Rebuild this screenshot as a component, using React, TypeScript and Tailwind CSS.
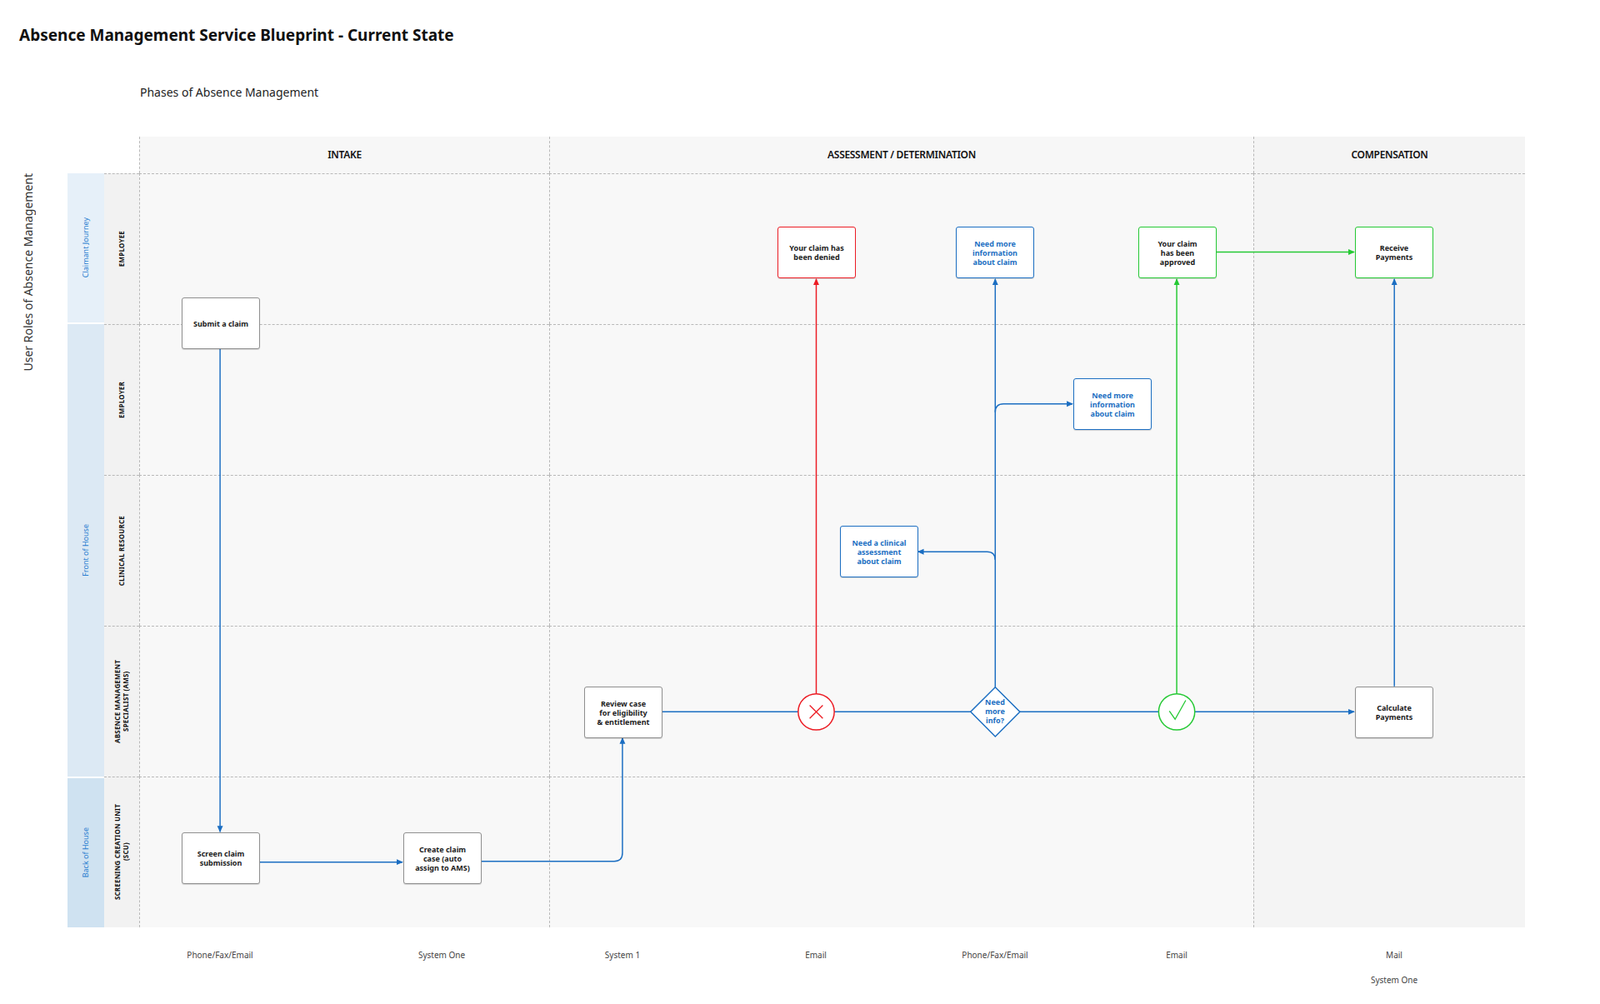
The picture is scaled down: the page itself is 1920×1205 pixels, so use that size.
import React from 'react';

const BLUE = '#1b6ec2';
const RED = '#ec1c24';
const GREEN = '#25c934';
const K = 0.9854;
const s = (v: number) => Math.round(v * K);

type NodeProps = { x: number; y: number; color?: 'gray' | 'red' | 'blue' | 'green'; lines: string[] };

const borderFor: Record<string, string> = {
  gray: 'border-[#8f8f8f] text-[#1a1a1a]',
  red: 'border-[#ec1c24] text-[#1a1a1a]',
  blue: 'border-[#1b6ec2] text-[#1b6ec2]',
  green: 'border-[#25c934] text-[#1a1a1a]',
};

const Node: React.FC<NodeProps> = ({ x, y, color = 'gray', lines }) => (
  <div
    className={`absolute w-[94px] h-[62px] bg-white border-[1.5px] rounded-[3px] shadow-[0_1px_1px_rgba(0,0,0,0.15)] flex flex-col items-center justify-center text-[9px] leading-[11px] font-bold text-center ${borderFor[color]}`}
    style={{ left: s(x), top: s(y) }}
  >
    {lines.map((l) => (
      <span key={l}>{l}</span>
    ))}
  </div>
);

const channels = [
  { x: 268, t: 'Phone/Fax/Email' },
  { x: 538, t: 'System One' },
  { x: 758, t: 'System 1' },
  { x: 994, t: 'Email' },
  { x: 1212, t: 'Phone/Fax/Email' },
  { x: 1433, t: 'Email' },
  { x: 1698, t: 'Mail' },
];

const roles = [
  ['EMPLOYEE'],
  ['EMPLOYER'],
  ['CLINICAL RESOURCE'],
  ['ABSENCE MANAGEMENT', 'SPECIALIST (AMS)'],
  ['SCREENING CREATION UNIT', '(SCU)'],
];

const App: React.FC = () => {
  return (
    <div className="relative w-[1920px] h-[1205px] bg-white font-['Lato','Liberation_Sans',sans-serif] text-[#111]">
      <div className="pt-[30px] pl-[23px] text-[19px] leading-[24px] font-bold">
        Absence Management Service Blueprint - Current State
      </div>
      <div className="mt-[47px] pl-[168px] text-[14px] leading-[20px] text-[#222]">Phases of Absence Management</div>

      <div className="mt-[43px] flex">
        <div className="w-[81px] pt-[44px] pl-[23px]">
          <div className="[writing-mode:vertical-rl] rotate-180 text-[14px] text-[#333] whitespace-nowrap">
            User Roles of Absence Management
          </div>
        </div>
        <div className="grid grid-cols-[44px_42px_492px_845px_326px] grid-rows-[44px_repeat(5,181px)]">
          <div />
          <div />
          {['INTAKE', 'ASSESSMENT / DETERMINATION', 'COMPENSATION'].map((p, i) => (
            <div
              key={p}
              className={`border-l border-dashed border-[#b8b8b8] flex items-center justify-center text-[12px] font-semibold tracking-tight ${i === 2 ? 'bg-[#f4f4f4]' : 'bg-[#f7f7f7]'}`}
            >
              {p}
            </div>
          ))}

          <div className="col-start-1 row-start-2 bg-[#e6f0f9] border-b-2 border-white flex items-center justify-center">
            <span className="[writing-mode:vertical-rl] rotate-180 text-[9px] text-[#2a7fd0]">Claimant Journey</span>
          </div>
          <div className="col-start-1 row-start-3 row-span-3 bg-[#dce9f4] flex items-center justify-center">
            <span className="[writing-mode:vertical-rl] rotate-180 text-[9px] text-[#2a7fd0]">Front of House</span>
          </div>
          <div className="col-start-1 row-start-6 bg-[#cfe2f1] border-t-2 border-white flex items-center justify-center">
            <span className="[writing-mode:vertical-rl] rotate-180 text-[9px] text-[#2a7fd0]">Back of House</span>
          </div>

          {roles.map((r, i) => (
            <React.Fragment key={r[0]}>
              <div
                className="col-start-2 bg-[#f2f2f2] border-t border-dashed border-[#b8b8b8] flex items-center justify-center"
                style={{ gridRowStart: i + 2 }}
              >
                <span className="[writing-mode:vertical-rl] rotate-180 text-[8px] leading-[10px] font-bold tracking-wide text-center whitespace-nowrap">
                  {r.map((l) => (
                    <span key={l} className="block">{l}</span>
                  ))}
                </span>
              </div>
              <div className="col-start-3 bg-[#f8f8f8] border-t border-l border-dashed border-[#b8b8b8]" style={{ gridRowStart: i + 2 }} />
              <div className="col-start-4 bg-[#f8f8f8] border-t border-l border-dashed border-[#b8b8b8]" style={{ gridRowStart: i + 2 }} />
              <div className="col-start-5 bg-[#f4f4f4] border-t border-l border-dashed border-[#b8b8b8]" style={{ gridRowStart: i + 2 }} />
            </React.Fragment>
          ))}
        </div>
      </div>

      {/* flow lines */}
      <svg className="absolute left-0 top-0 pointer-events-none" width={1920} height={1205}>
        <defs>
          <marker id="ab" markerWidth="8" markerHeight="8" refX="7" refY="4" orient="auto" markerUnits="userSpaceOnUse">
            <path d="M0 0.5 L8 4 L0 7.5 Z" fill={BLUE} />
          </marker>
          <marker id="ar" markerWidth="8" markerHeight="8" refX="7" refY="4" orient="auto" markerUnits="userSpaceOnUse">
            <path d="M0 0.5 L8 4 L0 7.5 Z" fill={RED} />
          </marker>
          <marker id="ag" markerWidth="8" markerHeight="8" refX="7" refY="4" orient="auto" markerUnits="userSpaceOnUse">
            <path d="M0 0.5 L8 4 L0 7.5 Z" fill={GREEN} />
          </marker>
        </defs>
        <g transform={`scale(${K})`}>
          <g fill="none" strokeWidth={1.5}>
            <path d="M268 424 V1013" stroke={BLUE} markerEnd="url(#ab)" />
            <path d="M316 1050 H490" stroke={BLUE} markerEnd="url(#ab)" />
            <path d="M585 1049 H748 Q758 1049 758 1039 V899" stroke={BLUE} markerEnd="url(#ab)" />
            <path d="M805 867 H1649" stroke={BLUE} markerEnd="url(#ab)" />
            <path d="M994 845 V340" stroke={RED} markerEnd="url(#ar)" />
            <path d="M1212 837 V340" stroke={BLUE} markerEnd="url(#ab)" />
            <path d="M1212 502 Q1212 492 1222 492 H1306" stroke={BLUE} markerEnd="url(#ab)" />
            <path d="M1212 682 Q1212 672 1202 672 H1118" stroke={BLUE} markerEnd="url(#ab)" />
            <path d="M1433 845 V340" stroke={GREEN} markerEnd="url(#ag)" />
            <path d="M1480 307 H1649" stroke={GREEN} markerEnd="url(#ag)" />
            <path d="M1698 836 V340" stroke={BLUE} markerEnd="url(#ab)" />
          </g>
          <circle cx={994} cy={867} r={22} fill="white" stroke={RED} strokeWidth={1.5} />
          <path d="M986 859 L1002 875 M1002 859 L986 875" stroke={RED} strokeWidth={1.3} />
          <polygon points="1212,837 1242,867 1212,897 1182,867" fill="white" stroke={BLUE} strokeWidth={1.5} />
          <circle cx={1433} cy={867} r={22} fill="white" stroke={GREEN} strokeWidth={1.5} />
          <path d="M1424 866 L1431 876 L1444 853" fill="none" stroke={GREEN} strokeWidth={1.3} />
        </g>
      </svg>

      <div
        className="absolute w-[60px] flex flex-col items-center text-[9px] leading-[11px] font-bold text-[#1b6ec2]"
        style={{ left: s(1212) - 30, top: s(867) - 17 }}
      >
        <span>Need</span>
        <span>more</span>
        <span>info?</span>
      </div>

      <Node x={221} y={362} lines={['Submit a claim']} />
      <Node x={221} y={1014} lines={['Screen claim', 'submission']} />
      <Node x={491} y={1014} lines={['Create claim', 'case (auto', 'assign to AMS)']} />
      <Node x={711} y={836} lines={['Review case', 'for eligibility', '& entitlement']} />
      <Node x={947} y={276} color="red" lines={['Your claim has', 'been denied']} />
      <Node x={1164} y={276} color="blue" lines={['Need more', 'information', 'about claim']} />
      <Node x={1386} y={276} color="green" lines={['Your claim', 'has been', 'approved']} />
      <Node x={1650} y={276} color="green" lines={['Receive', 'Payments']} />
      <Node x={1307} y={461} color="blue" lines={['Need more', 'information', 'about claim']} />
      <Node x={1023} y={640} color="blue" lines={['Need a clinical', 'assessment', 'about claim']} />
      <Node x={1650} y={836} lines={['Calculate', 'Payments']} />

      {channels.map((c, i) => (
        <span
          key={i}
          className="absolute -translate-x-1/2 text-[10px] text-[#444] whitespace-nowrap"
          style={{ left: s(c.x), top: s(1156) }}
        >
          {c.t}
        </span>
      ))}
      <span
        className="absolute -translate-x-1/2 text-[10px] text-[#444] whitespace-nowrap"
        style={{ left: s(1698), top: s(1186) }}
      >
        System One
      </span>
    </div>
  );
};

export default App;
